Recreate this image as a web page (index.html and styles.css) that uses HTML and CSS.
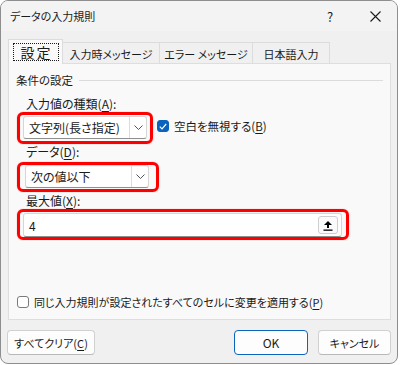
FILE: index.html
```html
<!DOCTYPE html>
<html lang="ja">
<head>
    <meta charset="UTF-8">
    <title>データの入力規則</title>
    <link rel="stylesheet" href="styles.css">
</head>
<body>

    <div class="window">
        <div class="titlebar">
            <span class="title">データの入力規則</span>
            <span class="help">?</span>
            <span class="close">
                <svg width="11" height="11" viewBox="0 0 11 11"><path d="M0.5 0.5 L10.5 10.5 M10.5 0.5 L0.5 10.5" stroke="#1a1a1a" stroke-width="1.1"/></svg>
            </span>
        </div>

        <div class="tabs">
            <div class="tab active"><span class="focus">設定</span></div>
            <div class="tab t2">入力時メッセージ</div>
            <div class="tab t3">エラー メッセージ</div>
            <div class="tab t4">日本語入力</div>
        </div>

        <div class="panel">
            <div class="group-title">
                <span>条件の設定</span>
                <span class="rule"></span>
            </div>

            <div class="label">入力値の種類(<u>A</u>):</div>
            <div class="row">
                <div class="mark m1">
                    <div class="combo">
                        <span class="combo-text">文字列(長さ指定)</span>
                        <span class="combo-btn">
                            <svg width="9" height="5" viewBox="0 0 9 5"><path d="M0.5 0.5 L4.5 4.5 L8.5 0.5" fill="none" stroke="#555" stroke-width="1"/></svg>
                        </span>
                    </div>
                </div>
                <div class="check">
                    <span class="box on">
                        <svg width="8" height="7" viewBox="0 0 8 7"><path d="M0.8 3.6 L3 5.8 L7.2 1" fill="none" stroke="#fff" stroke-width="1.2"/></svg>
                    </span>
                    空白を無視する(<u>B</u>)
                </div>
            </div>

            <div class="label l2">データ(<u>D</u>):</div>
            <div class="mark m2">
                <div class="combo">
                    <span class="combo-text">次の値以下</span>
                    <span class="combo-btn">
                        <svg width="9" height="5" viewBox="0 0 9 5"><path d="M0.5 0.5 L4.5 4.5 L8.5 0.5" fill="none" stroke="#555" stroke-width="1"/></svg>
                    </span>
                </div>
            </div>

            <div class="label l3">最大値(<u>X</u>):</div>
            <div class="mark m3">
                <div class="field">
                    <span class="field-text">4</span>
                    <span class="ref-btn">
                        <svg width="10" height="11" viewBox="0 0 10 11"><path d="M5 1 L9 5 L6 5 L6 8 L4 8 L4 5 L1 5 Z" fill="#000"/><rect x="0.5" y="9.5" width="9" height="1.3" fill="#000"/></svg>
                    </span>
                </div>
            </div>

            <div class="check bottom">
                <span class="box"></span>
                同じ入力規則が設定されたすべてのセルに変更を適用する(<u>P</u>)
            </div>
        </div>

        <div class="footer">
            <button class="btn clear">すべてクリア(<u>C</u>)</button>
            <span class="grow"></span>
            <button class="btn ok">OK</button>
            <button class="btn cancel">キャンセル</button>
        </div>
    </div>

</body>
</html>
```

FILE: styles.css
```css
body {
    margin: 0;
    padding: 0;
    background-color: #ffffff;
    font-family: "Noto Sans CJK JP", sans-serif;
    font-size: 11px;
    font-feature-settings: "palt";
    color: #1a1a1a;
}

u {
    text-decoration: underline;
    text-underline-offset: 2px;
}

.window {
    box-sizing: border-box;
    width: 398px;
    height: 364px;
    border: 1px solid #8e8e8e;
    border-radius: 8px;
    background-color: #f0f0f0;
    overflow: hidden;
    display: flex;
    flex-direction: column;
}

.titlebar {
    height: 30px;
    background-color: #f3f3f3;
    display: flex;
    align-items: center;
    padding-left: 9px;
    flex-shrink: 0;
}

.title {
    flex: 1;
    line-height: 16px;
}

.help {
    width: 8px;
    margin-right: 35px;
    font-size: 13px;
}

.close {
    width: 11px;
    height: 11px;
    margin-right: 16px;
    display: flex;
}

.tabs {
    display: flex;
    align-items: flex-end;
    height: 24px;
    margin-top: 8px;
    padding-left: 7px;
}

.tab {
    box-sizing: border-box;
    height: 21px;
    border: 1px solid #dcdcdc;
    border-bottom: none;
    border-left: none;
    background-color: #f0f0f0;
    display: flex;
    align-items: center;
    justify-content: center;
    line-height: 16px;
    padding-top: 1px;
}

.tab.active {
    position: relative;
    z-index: 1;
    width: 55px;
    height: 25px;
    margin-bottom: -1px;
    border-left: 1px solid #dcdcdc;
    background-color: #f9f9f9;
    padding-top: 0;
}

.focus {
    box-sizing: border-box;
    width: 46px;
    height: 18px;
    border: 1px dotted #1a1a1a;
    display: flex;
    align-items: center;
    justify-content: center;
    font-size: 14px;
    letter-spacing: 2px;
    padding-left: 2px;
}

.t2 {
    width: 97px;
}

.t3 {
    width: 93px;
}

.t4 {
    width: 77px;
}

.panel {
    box-sizing: border-box;
    height: 257px;
    margin: 0 6px 0 7px;
    border: 1px solid #dedede;
    background-color: #f9f9f9;
    padding: 8px 7px 9px 7px;
    display: flex;
    flex-direction: column;
    align-items: flex-start;
}

.group-title {
    display: flex;
    align-items: center;
    width: 100%;
    line-height: 16px;
    font-size: 11.5px;
}

.rule {
    flex: 1;
    height: 1px;
    background-color: #dcdcdc;
    margin-left: 6px;
    margin-right: 0;
}

.label {
    line-height: 16px;
    margin-top: 8px;
    margin-left: 10px;
    font-size: 12px;
}

.label.l2 {
    margin-top: 0;
}

.label.l3 {
    margin-top: 1px;
}

.row {
    display: flex;
    align-items: center;
}

.mark {
    box-sizing: border-box;
    border: 3px solid #ff0000;
    border-radius: 6px;
    margin-left: 1px;
    box-shadow: 0 0 1px rgba(255, 0, 0, 0.6);
}

.m1 {
    width: 136px;
    height: 32px;
    padding: 1px 3px 0 3px;
}

.m2 {
    width: 142px;
    height: 30px;
    margin-top: 2px;
    padding: 0 3px 0 5px;
}

.m3 {
    width: 332px;
    height: 31px;
    padding: 1px 3px 0 3px;
}

.combo {
    box-sizing: border-box;
    width: 124px;
    height: 23px;
    background-color: #ffffff;
    border: 1px solid #d6d6d6;
    border-bottom-color: #8f8f8f;
    border-radius: 3px;
    display: flex;
    align-items: center;
    font-size: 12px;
}

.combo-text {
    flex: 1;
    padding-left: 5px;
}

.combo-btn {
    box-sizing: border-box;
    width: 17px;
    height: 21px;
    border-left: 1px solid #dcdcdc;
    display: flex;
    align-items: center;
    justify-content: center;
}

.field {
    box-sizing: border-box;
    width: 319px;
    height: 24px;
    background-color: #ffffff;
    border: 1px solid #d6d6d6;
    border-bottom-color: #8f8f8f;
    border-radius: 3px;
    display: flex;
    align-items: center;
    font-size: 12px;
}

.field-text {
    flex: 1;
    padding-left: 5px;
}

.ref-btn {
    box-sizing: border-box;
    width: 20px;
    height: 18px;
    margin-right: 3px;
    border: 1px solid #cfcfcf;
    border-radius: 3px;
    background-color: #fbfbfb;
    display: flex;
    align-items: center;
    justify-content: center;
}

.check {
    display: flex;
    align-items: center;
    line-height: 16px;
    font-size: 11.5px;
}

.row .check {
    margin-left: 4px;
    margin-top: -4px;
}

.check.bottom {
    margin-top: auto;
    margin-left: 1px;
    font-size: 11px;
}

.box {
    box-sizing: border-box;
    width: 12px;
    height: 12px;
    border: 1px solid #7a7a7a;
    border-radius: 3px;
    background-color: #ffffff;
    margin-right: 5px;
    display: flex;
    align-items: center;
    justify-content: center;
}

.box.on {
    border-color: #0a63bd;
    background-color: #0a63bd;
}

.footer {
    display: flex;
    align-items: center;
    margin-top: 10px;
    padding: 0 6px;
}

.grow {
    flex: 1;
}

.btn {
    box-sizing: border-box;
    height: 25px;
    background-color: #fdfdfd;
    border: 1px solid #d0d0d0;
    border-bottom-color: #b8b8b8;
    border-radius: 4px;
    font-family: "Noto Sans CJK JP", sans-serif;
    font-size: 11px;
    font-feature-settings: "palt";
    color: #1a1a1a;
    padding: 0;
}

.clear {
    width: 88px;
}

.ok {
    width: 74px;
    border: 1px solid #0a63bd;
    box-shadow: inset 0 0 0 1px #ffffff;
    font-size: 12px;
}

.cancel {
    width: 73px;
    margin-left: 10px;
}
```
